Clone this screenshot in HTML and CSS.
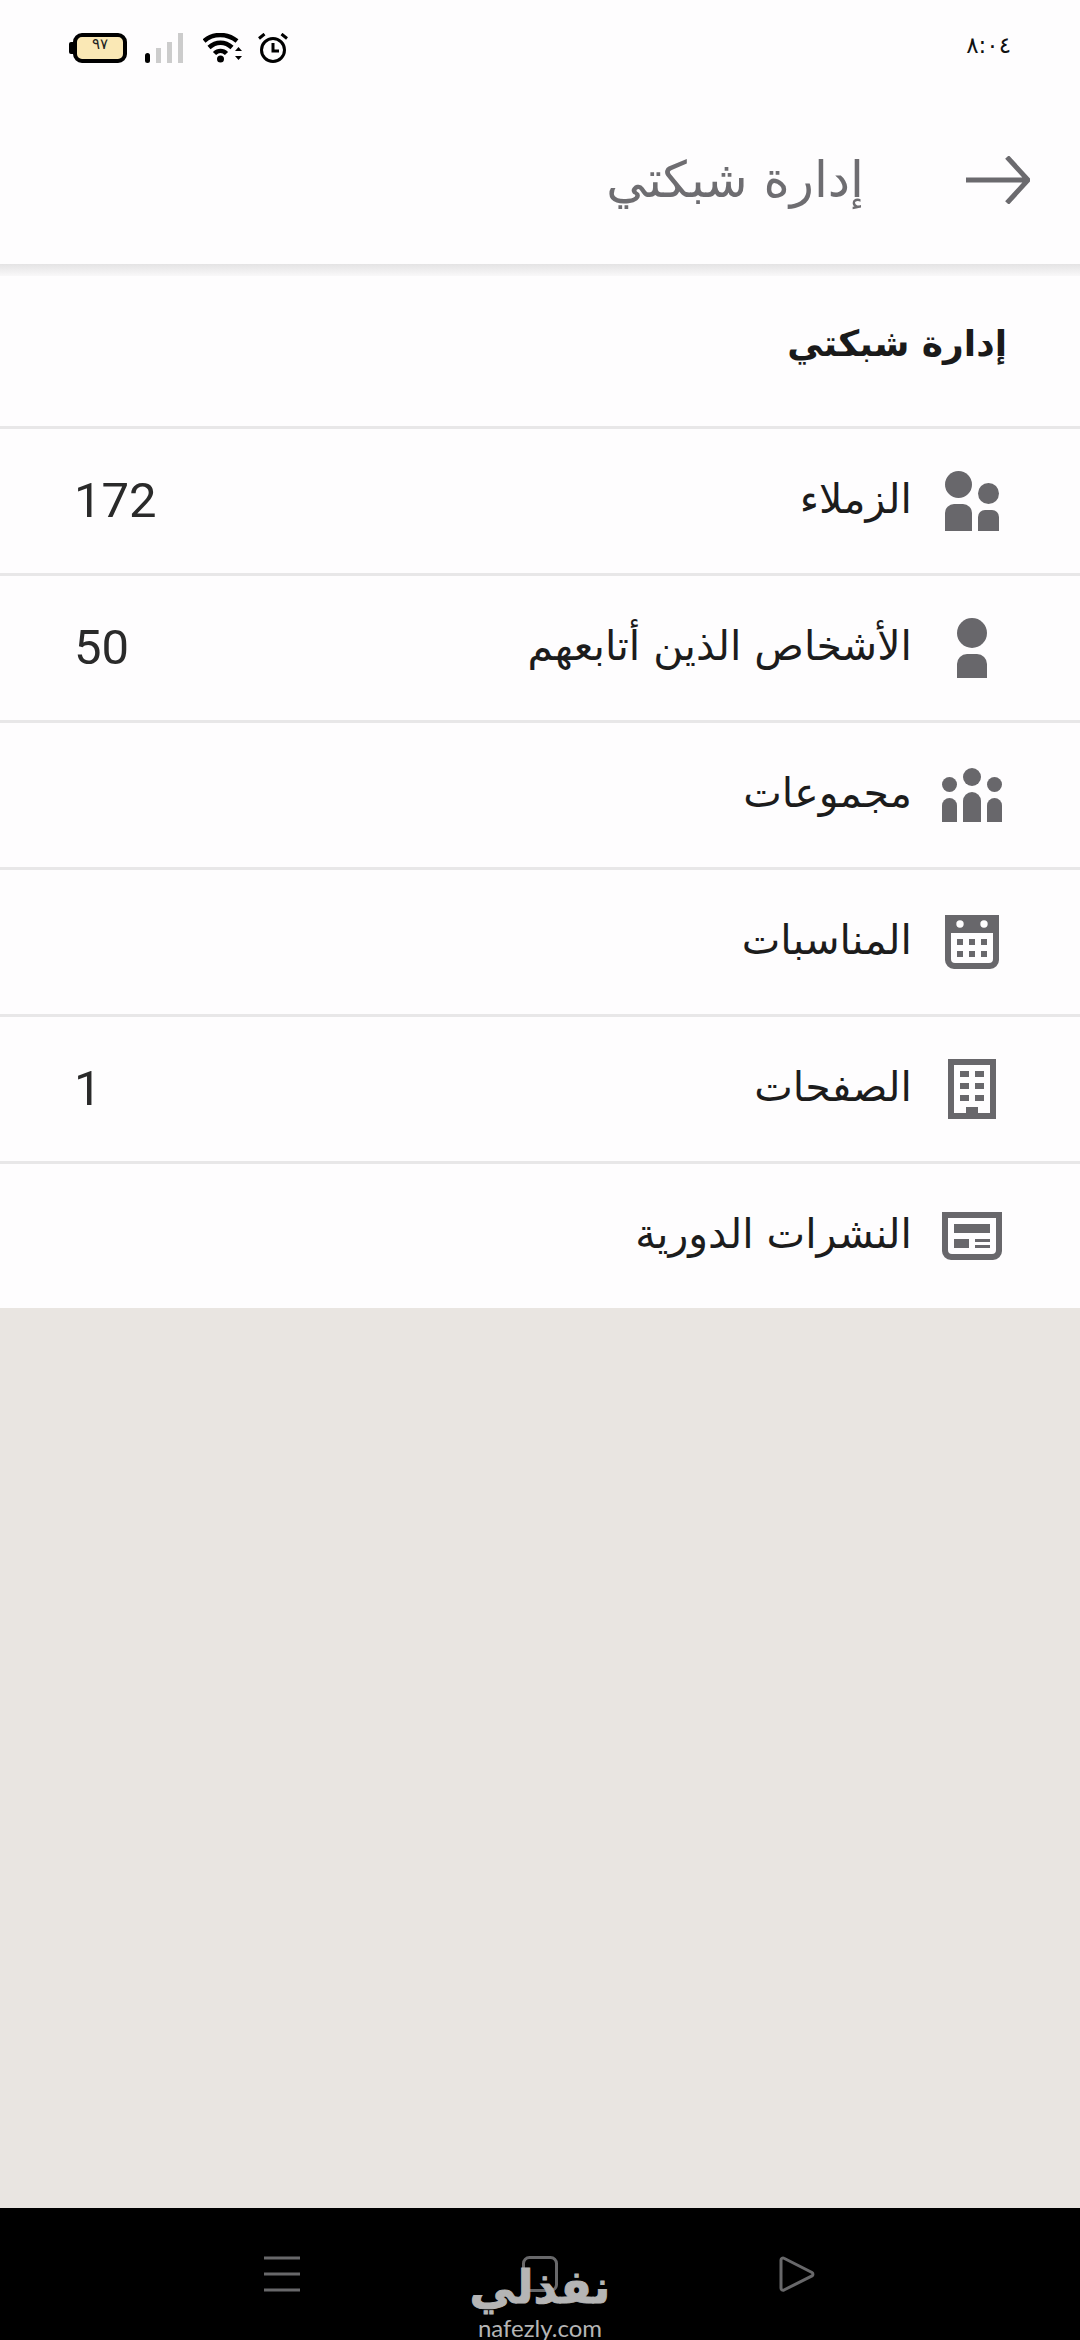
FILE: index.html
```html
<!DOCTYPE html>
<html lang="ar" dir="rtl">
<head>
<meta charset="utf-8">
<title>إدارة شبكتي</title>
<link rel="stylesheet" href="styles.css">
</head>
<body>
<div class="page">
  <header class="head">
    <div class="status">
      <span class="time" dir="ltr">٨:٠٤</span>
      <div class="status-icons" dir="ltr">
        <div class="battery"><span class="battery-text">٩٧</span></div>
        <svg class="sig" width="38" height="30" viewBox="0 0 38 30"><rect x="0" y="20" width="5" height="10" rx="2.5" fill="#000"/><rect x="11" y="15" width="5" height="15" fill="#ccc"/><rect x="22" y="9" width="5" height="21" fill="#ccc"/><rect x="33" y="0" width="5" height="30" fill="#ccc"/></svg>
        <svg class="wifi" width="40" height="30" viewBox="0 0 40 30"><g fill="none" stroke="#000" stroke-width="4.500"><path d="M1 8C10 0 24 0 34 8"/><path d="M6 14.500C13 8 22 8 29 14.500"/><path d="M11.500 20.500C15 17 20 17 23.500 20.500"/></g><circle cx="17.500" cy="26" r="3.500" fill="#000"/><path d="M32 18l3.500-4 3.500 4zM32 23l3.500 4 3.500-4z" fill="#000"/></svg>
        <svg class="alarm" width="30" height="30" viewBox="0 0 30 30"><circle cx="15" cy="17" r="11.500" fill="none" stroke="#000" stroke-width="3"/><path d="M15 10v8h6" fill="none" stroke="#000" stroke-width="3"/><path d="M1 5.500L6.500 1M29 5.500L23.500 1" fill="none" stroke="#000" stroke-width="3"/></svg>
      </div>
    </div>
    <div class="appbar">
      <svg class="back" width="64" height="48" viewBox="0 0 64 48"><path d="M0 24H61M41 1L62 24L41 47" fill="none" stroke="#6b6a6e" stroke-width="5"/></svg>
      <h1 class="title">إدارة شبكتي</h1>
    </div>
  </header>
  <div class="head-shadow"></div>
  <main class="list">
    <h2 class="section-title">إدارة شبكتي</h2>
    <div class="row">
      <div class="ico"><svg width="54" height="60" viewBox="0 0 54 60" class="g"><circle cx="13.500" cy="13.500" r="13.500"/><path d="M0 60V42a9 9 0 0 1 9-9h9a9 9 0 0 1 9 9V60Z"/><circle cx="43.500" cy="22.500" r="10.500"/><path d="M33 60V46a7 7 0 0 1 7-7h7a7 7 0 0 1 7 7V60Z"/></svg></div>
      <span class="label">الزملاء</span>
      <span class="count">172</span>
    </div>
    <div class="row">
      <div class="ico"><svg width="30" height="60" viewBox="0 0 30 60" class="g"><circle cx="15" cy="15" r="15"/><path d="M0 60V46a10 10 0 0 1 10-10h10a10 10 0 0 1 10 10V60Z"/></svg></div>
      <span class="label">الأشخاص الذين أتابعهم</span>
      <span class="count">50</span>
    </div>
    <div class="row">
      <div class="ico"><svg width="60" height="54" viewBox="0 0 60 54" class="g"><circle cx="30" cy="9" r="9"/><path d="M21 54V33a9 9 0 0 1 18 0V54Z"/><circle cx="7.500" cy="16.500" r="7.500"/><path d="M0 54V37.500a7.500 7.500 0 0 1 15 0V54Z"/><circle cx="52.500" cy="16.500" r="7.500"/><path d="M45 54V37.500a7.500 7.500 0 0 1 15 0V54Z"/></svg></div>
      <span class="label">مجموعات</span>
    </div>
    <div class="row">
      <div class="ico"><svg width="54" height="54" viewBox="0 0 54 54" class="g"><path fill-rule="evenodd" d="M0 0H54V45a9 9 0 0 1-9 9H9a9 9 0 0 1-9-9ZM6 18V44a4 4 0 0 0 4 4H44a4 4 0 0 0 4-4V18Z"/><circle class="w" cx="15" cy="9" r="3.700"/><circle class="w" cx="39" cy="9" r="3.700"/><path d="M12 24h6v6h-6zM24 24h6v6h-6zM36 24h6v6h-6zM12 36h6v6h-6zM24 36h6v6h-6zM36 36h6v6h-6z"/></svg></div>
      <span class="label">المناسبات</span>
    </div>
    <div class="row">
      <div class="ico"><svg width="48" height="60" viewBox="0 0 48 60" class="g"><path fill-rule="evenodd" d="M0 0H48V60H0ZM6 6V54H18V48H30V54H42V6Z"/><path d="M12 12h9v6h-9zM27 12h9v6h-9zM12 24h9v6h-9zM27 24h9v6h-9zM12 36h9v6h-9zM27 36h9v6h-9z"/></svg></div>
      <span class="label">الصفحات</span>
      <span class="count">1</span>
    </div>
    <div class="row">
      <div class="ico"><svg width="60" height="48" viewBox="0 0 60 48" class="g"><path fill-rule="evenodd" d="M0 0H60V39a9 9 0 0 1-9 9H9a9 9 0 0 1-9-9ZM6 6V38a4 4 0 0 0 4 4H50a4 4 0 0 0 4-4V6Z"/><path d="M12 12h36v9H12zM12 27h15v9H12zM33 27h15v3H33zM33 33h15v3H33z"/></svg></div>
      <span class="label">النشرات الدورية</span>
    </div>
  </main>
  <div class="fill"></div>
  <nav class="nav" dir="ltr">
    <svg width="36" height="36" viewBox="0 0 36 36"><path d="M0 2H36M0 18H36M0 34H36" stroke="#68686a" stroke-width="3" fill="none"/></svg>
    <svg width="36" height="36" viewBox="0 0 36 36"><rect x="1.500" y="1.500" width="33" height="33" rx="6" fill="none" stroke="#68686a" stroke-width="3"/></svg>
    <svg width="36" height="36" viewBox="0 0 36 36"><path d="M2 4a2 2 0 0 1 3-1.700L33 16.500a2 2 0 0 1 0 3.400L5 34a2 2 0 0 1-3-1.700Z" fill="none" stroke="#68686a" stroke-width="3"/></svg>
    <div class="logo">
      <span class="logo-ar" dir="rtl">نفذلي</span>
      <span class="logo-en">nafezly.com</span>
    </div>
  </nav>
</div>
</body>
</html>
```
FILE: styles.css
```css
* { box-sizing: border-box; margin: 0; padding: 0; }
html, body { width: 1080px; height: 2340px; overflow: hidden; }
body { font-family: "DejaVu Sans", "Noto Sans", sans-serif; background: #fefdfe; }
.page { width: 1080px; height: 2340px; display: flex; flex-direction: column; }

.head { height: 264px; flex: none; background: #fefdfe; }
.status { height: 96px; padding: 33px 69px 0 69px; display: flex; justify-content: space-between; align-items: flex-start; }
.status-icons { display: flex; align-items: flex-start; }
.sig { margin-left: 18px; }
.wifi { margin-left: 20px; }
.alarm { margin-left: 15px; }
.time { font-size: 23px; line-height: 24px; color: #111; }
.battery { position: relative; width: 54px; height: 30px; margin-left: 4px; border: 4px solid #000; border-radius: 9px; background: #fae8b5; display: flex; justify-content: center; align-items: flex-start; }
.battery::before { content: ""; position: absolute; left: -8px; top: 5px; width: 4px; height: 12px; background: #000; border-radius: 2px 0 0 2px; }
.battery-text { font-size: 15px; line-height: 15px; color: #222; }

.appbar { height: 168px; display: flex; align-items: center; gap: 102px; padding-right: 50px; }
.title { font-size: 50px; font-weight: 400; color: #6e6d71; line-height: 60px; }
.head-shadow { height: 12px; flex: none; background: linear-gradient(#e4e3e4, #f9f8f9); }

.list { flex: none; background: #fefdfe; }
.section-title { height: 150px; display: flex; align-items: center; padding: 0 73px 16px 0; font-size: 36px; font-weight: 700; color: #1a1a1a; }
.row { height: 147px; border-top: 3px solid #e8e7e8; display: flex; align-items: center; padding: 0 72px 0 74px; }
.ico { width: 72px; flex: none; display: flex; justify-content: center; align-items: center; margin-left: 24px; }
.g { fill: #68676b; display: block; }
.g .w { fill: #fefdfe; }
.label { font-size: 41px; color: #1c1c1c; line-height: 50px; padding-bottom: 4px; }
.count { margin-right: auto; font-family: Roboto, sans-serif; font-size: 49px; color: #2a2a2a; line-height: 50px; }

.fill { flex: 1; background: #e9e5e1; }
.nav { position: relative; height: 132px; flex: none; background: #000; display: flex; justify-content: space-between; padding: 48px 265px 0 264px; align-items: flex-start; }
.logo { position: absolute; left: 460px; top: 50px; width: 160px; display: flex; flex-direction: column; align-items: center; color: #b5b5b5; }
.logo-ar { font-size: 46px; font-weight: 700; line-height: 58px; -webkit-text-stroke: 1px #b5b5b5; }
.logo-en { font-family: Lato, sans-serif; font-size: 24px; line-height: 24px; }
```
